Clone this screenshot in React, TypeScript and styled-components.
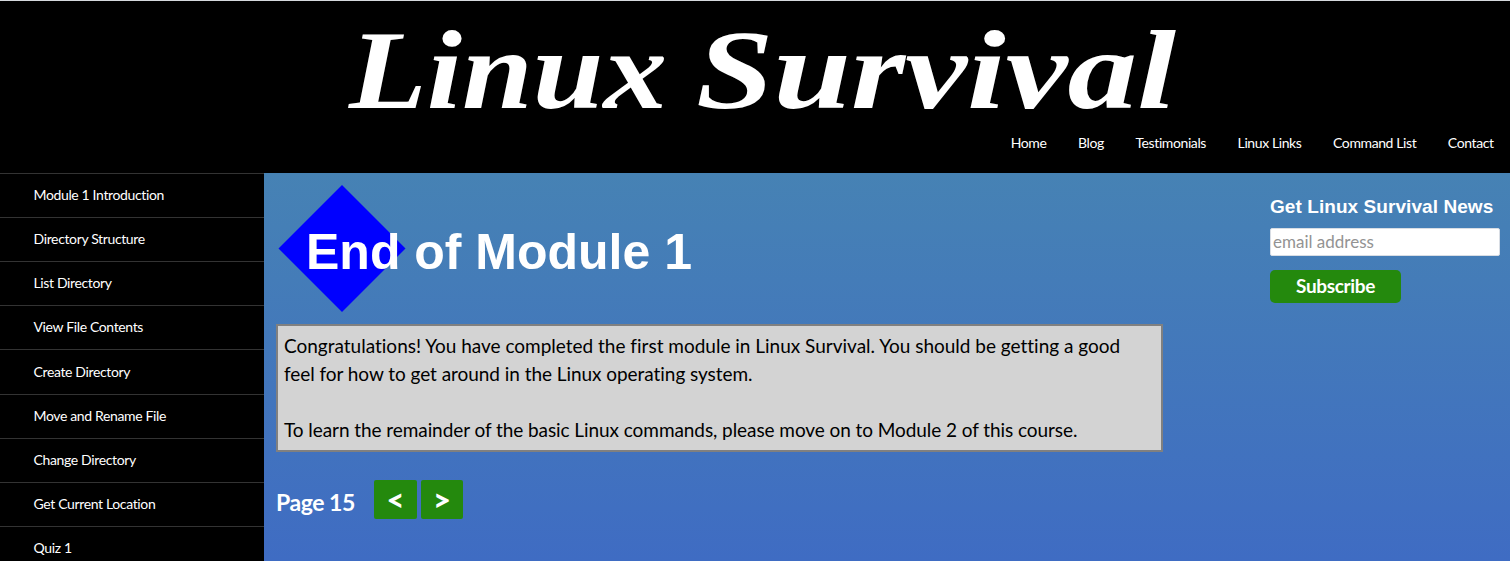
import React from "react";
import styled, { createGlobalStyle } from "styled-components";

const Global = createGlobalStyle`
  * { box-sizing: border-box; }
  html, body { margin: 0; background: #fff; }
  body { font-family: Lato, sans-serif; overflow: hidden; }
`;

const Page = styled.div`
  width: 1510px;
  height: 561px;
  display: flex;
  flex-direction: column;
  border-top: 1px solid #d5d9dd;
  overflow: hidden;
`;

const Header = styled.header`
  flex: 0 0 172px;
  background: #000;
  display: flex;
  flex-direction: column;
`;

const Logo = styled.svg`
  display: block;
  width: 860px;
  height: 132px;
  margin-left: 340px;
  fill: #fff;
  font: italic bold 112px "Liberation Serif", serif;
`;

const TopNav = styled.nav`
  display: flex;
  justify-content: flex-end;
  gap: 31.6px;
  padding-right: 16.4px;
`;

const NavLink = styled.a`
  color: #fff;
  font-size: 14px;
  line-height: 20px;
  letter-spacing: -0.4px;
  white-space: nowrap;
`;

const Body = styled.div`
  flex: 1;
  min-height: 0;
  display: flex;
`;

const Sidebar = styled.ul`
  flex: 0 0 264px;
  margin: 0;
  padding: 0;
  list-style: none;
  background: #000;
  overflow: hidden;
`;

const SideItem = styled.li`
  height: 44.11px;
  border-top: 1px solid #333;
  padding: 11.14px 0 0 33.5px;
  color: #fff;
  font-size: 14px;
  line-height: 20px;
  letter-spacing: -0.36px;
`;

const Content = styled.div`
  flex: 1;
  display: flex;
  background: linear-gradient(#4682b4, #3f6cc3);
`;

const Main = styled.main`
  width: 899px;
  padding: 12px 0 0 12px;
`;

const Banner = styled.svg`
  display: block;
  width: 430px;
  height: 139px;
  font: bold 50px "Liberation Sans", sans-serif;
`;

const Message = styled.section`
  width: 887px;
  height: 128px;
  border: 2px solid #808080;
  background: #d3d3d3;
  padding: 6px 6px 0;
  color: #000;
  font-size: 19px;
  line-height: 28px;
  white-space: nowrap;
`;

const Line = styled.p<{ $tracking: number; $gap?: boolean }>`
  margin: 0 0 ${(p) => (p.$gap ? 28 : 0)}px;
  letter-spacing: ${(p) => p.$tracking}px;
`;

const Pager = styled.div`
  display: flex;
  padding-top: 28px;
`;

const PageLabel = styled.span`
  width: 98px;
  padding-top: 7px;
  color: #fff;
  font-size: 23px;
  font-weight: 700;
  line-height: 30px;
  letter-spacing: -0.45px;
`;

const PageButton = styled.button<{ $width: number }>`
  width: ${(p) => p.$width}px;
  height: 39px;
  margin-right: 4px;
  padding: 0;
  border: 0;
  border-radius: 2px;
  background: #24890d;
  color: #fff;
  font: 900 31px/39px Lato, sans-serif;
`;

const Signup = styled.aside`
  margin-left: 107px;
  width: 230px;
  padding-top: 22px;
`;

const SignupTitle = styled.h2`
  margin: 0 0 9px;
  color: #fff;
  font: bold 19px/24px "Liberation Sans", sans-serif;
  letter-spacing: 0.07px;
  white-space: nowrap;
`;

const Email = styled.input`
  display: block;
  width: 230px;
  height: 28px;
  padding: 0 2px 2px;
  border: 1px solid #d8dde4;
  border-radius: 2px;
  background: #fff;
  font: 17px Lato, sans-serif;
  &::placeholder { color: #939393; opacity: 1; }
`;

const Subscribe = styled.button`
  width: 131px;
  height: 33px;
  margin-top: 14px;
  padding: 0 0 2px;
  border: 0;
  border-radius: 5px;
  background: #24890d;
  color: #fff;
  font: bold 19px/31px Lato, sans-serif;
  letter-spacing: -0.35px;
`;

const links = ["Home", "Blog", "Testimonials", "Linux Links", "Command List", "Contact"];
const lessons = [
  "Module 1 Introduction",
  "Directory Structure",
  "List Directory",
  "View File Contents",
  "Create Directory",
  "Move and Rename File",
  "Change Directory",
  "Get Current Location",
  "Quiz 1",
];

export default function App() {
  return (
    <>
      <Global />
      <Page>
        <Header>
          <Logo viewBox="0 0 860 132">
            <text x="9" y="107" textLength="318" lengthAdjust="spacingAndGlyphs">Linux</text>
            <text x="356" y="107" textLength="480" lengthAdjust="spacingAndGlyphs">Survival</text>
          </Logo>
          <TopNav>
            {links.map((l) => <NavLink key={l}>{l}</NavLink>)}
          </TopNav>
        </Header>
        <Body>
          <Sidebar>
            {lessons.map((l) => <SideItem key={l}>{l}</SideItem>)}
          </Sidebar>
          <Content>
            <Main>
              <Banner viewBox="0 0 430 139">
                <path d="M2.5 63.5 66 0l63.5 63.5L66 127Z" fill="#00f" />
                <text x="30" y="84" fill="#fff" textLength="386">End of Module 1</text>
              </Banner>
              <Message>
                <Line $tracking={-0.005}>
                  Congratulations! You have completed the first module in Linux Survival. You should be getting a good
                </Line>
                <Line $tracking={-0.05} $gap>feel for how to get around in the Linux operating system.</Line>
                <Line $tracking={-0.07}>To learn the remainder of the basic Linux commands, please move on to Module 2 of this course.</Line>
              </Message>
              <Pager>
                <PageLabel>Page 15</PageLabel>
                <PageButton $width={43}>&lt;</PageButton>
                <PageButton $width={42}>&gt;</PageButton>
              </Pager>
            </Main>
            <Signup>
              <SignupTitle>Get Linux Survival News</SignupTitle>
              <Email placeholder="email address" />
              <Subscribe>Subscribe</Subscribe>
            </Signup>
          </Content>
        </Body>
      </Page>
    </>
  );
}
